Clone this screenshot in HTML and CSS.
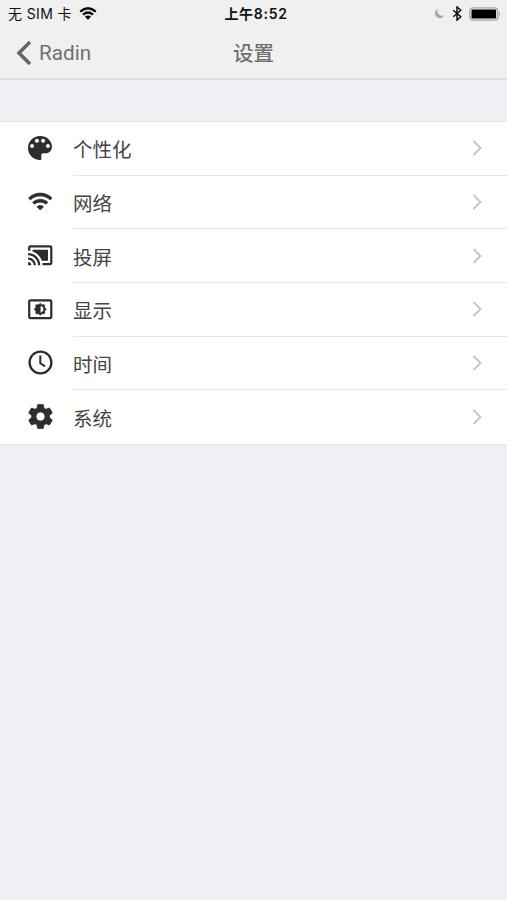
FILE: index.html
```html
<!DOCTYPE html>
<html lang="zh-CN">
<head>
<meta charset="utf-8">
<title>设置</title>
<link rel="stylesheet" href="styles.css">
</head>
<body>
<header class="top">
  <div class="status">
    <div class="carrier"><span>无 SIM 卡</span>
      <svg class="wifi" viewBox="0 0 18 13"><path d="M1.2 4.6Q9-2.2 16.8 4.6M4 7.7q5-4.3 10 0"/><path class="dot" d="M9 12.8L5.9 9.7q3.1-2.4 6.2 0z"/></svg>
    </div>
    <div class="clock">上午8:52</div>
    <div class="indicators">
      <svg class="moon" viewBox="0 0 12 12"><path d="M4.2.8A5.4 5.4 0 1 0 11.3 8 5.4 5.4 0 0 1 4.2.8z"/></svg>
      <svg class="bluetooth" viewBox="0 0 10 16"><path d="M1 4.5l8 7L5 15V1l4 3.5-8 7"/></svg>
      <svg class="battery" viewBox="0 0 32 14"><rect class="shell" x=".8" y=".8" width="28" height="12.4" rx="3"/><rect x="2.5" y="2.5" width="24.6" height="9" rx="1.2"/><path class="cap" d="M30 4.5q2 2.5 0 5z"/></svg>
    </div>
  </div>
  <nav class="nav">
    <a class="back"><svg viewBox="0 0 18 28"><path d="M15 3L4 14l11 11"/></svg><span>Radin</span></a>
    <h1>设置</h1>
  </nav>
</header>
<main class="list">
  <div class="row">
    <svg class="icon palette" viewBox="0 0 24 24"><path d="M12 3c-4.97 0-9 4.03-9 9s4.03 9 9 9c.7 0 1-.4 1-1v-2.6c0-.83.6-1.4 1.4-1.4H16c2.76 0 5-2.24 5-5 0-4.42-4.03-8-9-8zm-6 9c-.83 0-1.4-.67-1.4-1.5S5.17 9 6 9s1.5.67 1.5 1.5S6.83 12 6 12zm3.7-4C8.87 8 8.2 7.33 8.2 6.5S8.87 5 9.7 5s1.5.67 1.5 1.5S10.53 8 9.7 8zm4.6 0c-.83 0-1.5-.67-1.5-1.5S13.47 5 14.3 5s1.5.67 1.5 1.5S15.13 8 14.3 8zm3.7 4c-.83 0-1.5-.67-1.5-1.5S17.17 9 18 9s1.4.67 1.4 1.5S18.83 12 18 12z"/></svg>
    <div class="cell"><span>个性化</span><svg class="chevron" viewBox="0 0 10 18"><path d="M1.5 2L8.5 9l-7 7"/></svg></div>
  </div>
  <div class="row">
    <svg class="icon strong" viewBox="0 0 24 24"><path d="M1.3 9l1.8 1.8c4.97-4.8 12.83-4.8 17.8 0L22.7 9C16.73 3.13 7.28 3.13 1.3 9zm7.7 8l3 3 3-3c-1.65-1.66-4.34-1.66-6 0zm-4-4l1.8 1.8c2.76-2.6 7.64-2.6 10.4 0L19 13C15.14 9.34 8.87 9.34 5 13z"/></svg>
    <div class="cell"><span>网络</span><svg class="chevron" viewBox="0 0 10 18"><path d="M1.5 2L8.5 9l-7 7"/></svg></div>
  </div>
  <div class="row">
    <svg class="icon" viewBox="0 0 24 24"><path d="M1 18v3h3c0-1.66-1.34-3-3-3zm0-4v2c2.76 0 5 2.24 5 5h2c0-3.87-3.13-7-7-7zm18-7H5v1.63c3.96 1.28 7.09 4.41 8.37 8.37H19V7zM1 10v2c4.97 0 9 4.03 9 9h2c0-6.08-4.93-11-11-11zm20-7H3c-1.1 0-2 .9-2 2v3h2V5h18v14h-7v2h7c1.1 0 2-.9 2-2V5c0-1.1-.9-2-2-2z"/></svg>
    <div class="cell"><span>投屏</span><svg class="chevron" viewBox="0 0 10 18"><path d="M1.5 2L8.5 9l-7 7"/></svg></div>
  </div>
  <div class="row">
    <svg class="icon" viewBox="0 0 24 24"><path d="M21 3H3c-1.11 0-2 .89-2 2v14c0 1.1.89 2 2 2h18c1.11 0 2-.9 2-2V5c0-1.11-.89-2-2-2zm0 16.01H3V4.99h18v14.02z"/><path class="strong" d="M8 16h2.5l1.5 1.5 1.5-1.5H16v-2.5l1.5-1.5-1.5-1.5V8h-2.5L12 6.5 10.5 8H8v2.5L6.5 12 8 13.5V16zm4-7.2c1.7 0 3.2 1.44 3.2 3.2s-1.5 3.2-3.2 3.2z"/></svg>
    <div class="cell"><span>显示</span><svg class="chevron" viewBox="0 0 10 18"><path d="M1.5 2L8.5 9l-7 7"/></svg></div>
  </div>
  <div class="row">
    <svg class="icon round" viewBox="0 0 24 24"><path d="M11.99 2C6.47 2 2 6.48 2 12s4.47 10 9.99 10C17.52 22 22 17.52 22 12S17.52 2 11.99 2zM12 20c-4.42 0-8-3.58-8-8s3.58-8 8-8 8 3.58 8 8-3.58 8-8 8zM12.7 6.3H11V13l4.3 2.9.9-1.4-3.5-2.3z"/></svg>
    <div class="cell"><span>时间</span><svg class="chevron" viewBox="0 0 10 18"><path d="M1.5 2L8.5 9l-7 7"/></svg></div>
  </div>
  <div class="row">
    <svg class="icon round strong" viewBox="0 0 24 24"><path d="M19.43 12.98c.04-.32.07-.64.07-.98s-.03-.66-.07-.98l2.11-1.65c.19-.15.24-.42.12-.64l-2-3.46c-.12-.22-.39-.3-.61-.22l-2.49 1c-.52-.4-1.08-.73-1.69-.98l-.38-2.65C14.46 2.18 14.25 2 14 2h-4c-.25 0-.46.18-.49.42l-.38 2.65c-.61.25-1.17.59-1.69.98l-2.49-1c-.23-.09-.49 0-.61.22l-2 3.46c-.13.22-.07.49.12.64l2.11 1.65c-.04.32-.07.65-.07.98s.03.66.07.98l-2.11 1.65c-.19.15-.24.42-.12.64l2 3.46c.12.22.39.3.61.22l2.49-1c.52.4 1.08.73 1.69.98l.38 2.65c.03.24.24.42.49.42h4c.25 0 .46-.18.49-.42l.38-2.65c.61-.25 1.17-.59 1.69-.98l2.49 1c.23.09.49 0 .61-.22l2-3.46c.12-.22.07-.49-.12-.64l-2.11-1.65zM12 15.7a3.7 3.7 0 1 1 0-7.4 3.7 3.7 0 0 1 0 7.4z"/></svg>
    <div class="cell"><span>系统</span><svg class="chevron" viewBox="0 0 10 18"><path d="M1.5 2L8.5 9l-7 7"/></svg></div>
  </div>
</main>
</body>
</html>
```
FILE: styles.css
```css
* { box-sizing: border-box; }
body {
  margin: 0;
  min-height: 100vh;
  background: #efeff4;
  font-family: Roboto, "Noto Sans CJK SC", sans-serif;
  color: #444;
}
svg { display: block; flex: none; }
.top {
  height: 80px;
  background: #f0f0f0;
  border-bottom: 2px solid #dfdfe1;
}
.status {
  display: grid;
  grid-template-columns: 1fr auto 1fr;
  align-items: center;
  height: 27px;
  padding: 0 6px 0 8px;
  font-family: Inter, "Noto Sans CJK SC", sans-serif;
  font-size: 14px;
  line-height: 26px;
  color: #111;
}
.carrier { display: flex; align-items: center; gap: 7px; white-space: nowrap; }
.carrier span { letter-spacing: 0.38px; }
.wifi { width: 18px; height: 13px; fill: none; stroke: #000; stroke-width: 2.3; }
.wifi .dot { fill: #000; stroke: none; }
.clock { padding-left: 3px; font-weight: 600; letter-spacing: 0.7px; }
.indicators { display: flex; align-items: center; justify-content: flex-end; }
.moon { width: 11px; height: 11px; fill: #a9a9a9; }
.bluetooth { width: 10px; height: 15px; margin: 0 7px 0 7px; fill: none; stroke: #111; stroke-width: 1.6; }
.battery { width: 32px; height: 14px; }
.shell { fill: none; stroke: #a5a5a5; stroke-width: 1.3; }
.cap { fill: #a5a5a5; }
.nav {
  display: grid;
  grid-template-columns: 1fr auto 1fr;
  align-items: center;
  height: 51px;
  color: #707070;
}
.back { display: flex; align-items: center; gap: 6px; padding-left: 15px; font-size: 20.7px; }
.back svg { width: 18px; height: 28px; fill: none; stroke: #666; stroke-width: 3.6; }
.nav h1 { margin: 0; padding-top: 2px; font-size: 20.5px; line-height: 30px; font-weight: 500; }
.list {
  display: grid;
  grid-template-rows: repeat(6, 53.7px);
  margin-top: 41px;
  border-top: 1px solid #e2e2e5;
  border-bottom: 1px solid #e4e4e7;
  background: #fff;
}
.row { display: grid; grid-template-columns: 73px 1fr; align-items: center; }
.icon { justify-self: center; width: 26.5px; height: 26.5px; margin: 0 0 2px 6.5px; fill: #2d2d2d; }
.palette { width: 32px; height: 32px; }
.round { width: 29px; height: 29px; margin-left: 7.5px; }
.strong { stroke: #2d2d2d; stroke-width: 0.6; }
.cell {
  display: flex;
  align-items: center;
  justify-content: space-between;
  height: 100%;
  padding-right: 25px;
  border-bottom: 1px solid #e8e8e8;
  font-size: 19.5px;
  line-height: 30px;
}
.cell span { padding-top: 6px; }
.row:last-child .cell { border-bottom: 0; }
.chevron { width: 10px; height: 18px; fill: none; stroke: #c4c4c6; stroke-width: 1.8; }
```
